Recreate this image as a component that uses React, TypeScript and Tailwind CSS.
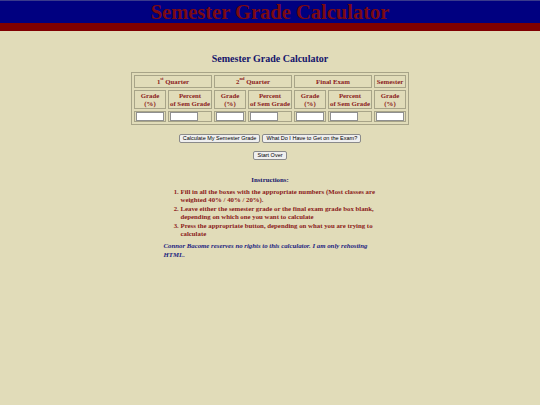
import React from 'react';

// Semester grade calculator — old-school table page, scaled down
const serif = { fontFamily: '"Liberation Serif", "Times New Roman", serif' };
const sans = { fontFamily: '"Liberation Sans", Arial, sans-serif' };

const GROUPS = [
  { label: '1', sup: 'st', rest: ' Quarter', span: 2 },
  { label: '2', sup: 'nd', rest: ' Quarter', span: 2 },
  { label: 'Final Exam', sup: '', rest: '', span: 2 },
  { label: 'Semester', sup: '', rest: '', span: 1 },
];

const SUBS = ['grade', 'pct', 'grade', 'pct', 'grade', 'pct', 'grade'];
const WIDTHS = ['w-[32px]', 'w-[44px]', 'w-[32px]', 'w-[44px]', 'w-[32px]', 'w-[44px]', 'w-[32px]'];

const cell = 'border border-[#a8a488] text-center align-middle p-0';

function Btn({ children }: { children: React.ReactNode }) {
  return (
    <button
      className="h-[9px] px-[3px] bg-[#efefef] border border-[#8a8a8a] rounded-[2px] text-[5.5px] leading-[7px] text-black"
      style={sans}
    >
      {children}
    </button>
  );
}

export default function App() {
  return (
    <div className="min-h-screen bg-[#e1dcb9]" style={serif}>
      {/* banner */}
      <div className="h-[23px] bg-[#000080] border-t border-[#3a3a8c] flex items-center justify-center">
        <h1 className="text-[20.5px] leading-[22px] font-bold text-[#7a0a12]">Semester Grade Calculator</h1>
      </div>
      <div className="h-[8px] bg-[#800000]" />

      <h2 className="mt-[22px] text-center text-[10px] leading-[12px] font-bold text-[#14146b]">
        Semester Grade Calculator
      </h2>

      <div className="mt-[7px] flex justify-center">
        <table className="table-fixed border-separate border-spacing-[2px] border border-[#a8a488] text-[#8b1a1a] font-bold text-[6.8px] leading-[7.5px]">
          <tbody>
            <tr className="h-[13px]">
              {GROUPS.map((g, i) => (
                <td key={i} colSpan={g.span} className={cell}>
                  {g.label}
                  {g.sup && <sup className="text-[4.5px] align-[2px]">{g.sup}</sup>}
                  {g.rest}
                </td>
              ))}
            </tr>
            <tr className="h-[19px]">
              {SUBS.map((s, i) => (
                <td key={i} className={`${cell} ${WIDTHS[i]}`}>
                  {s === 'grade' ? (
                    <>Grade<br />(%)</>
                  ) : (
                    <>Percent<br />of Sem Grade</>
                  )}
                </td>
              ))}
            </tr>
            <tr className="h-[11px]">
              {SUBS.map((_, i) => (
                <td key={i} className={cell}>
                  <div className="flex pl-[1px]">
                    <input className="block w-[28px] h-[9px] bg-white border border-[#8f8f8f] outline-none" />
                  </div>
                </td>
              ))}
            </tr>
          </tbody>
        </table>
      </div>

      <div className="mt-[9px] flex justify-center gap-[2px]">
        <Btn>Calculate My Semester Grade</Btn>
        <Btn>What Do I Have to Get on the Exam?</Btn>
      </div>
      <div className="mt-[8px] flex justify-center">
        <Btn>Start Over</Btn>
      </div>

      <h3 className="mt-[16px] text-center text-[6.8px] leading-[8px] font-bold text-[#14146b]">Instructions:</h3>

      <div className="w-[213px] mx-auto">
        <ol className="mt-[4px] pl-[17px] list-decimal text-[6.8px] leading-[8.4px] font-bold text-[#8b1a1a]">
          <li>Fill in all the boxes with the appropriate numbers (Most classes are weighted 40% / 40% / 20%).</li>
          <li>Leave either the semester grade or the final exam grade box blank, depending on which one you want to calculate</li>
          <li>Press the appropriate button, depending on what you are trying to calculate</li>
        </ol>
        <p className="mt-[4px] text-[6.8px] leading-[8.4px] font-bold italic text-[#1c1c80]">
          Connor Bacome reserves no rights to this calculator. I am only rehosting HTML.
        </p>
      </div>
    </div>
  );
}
